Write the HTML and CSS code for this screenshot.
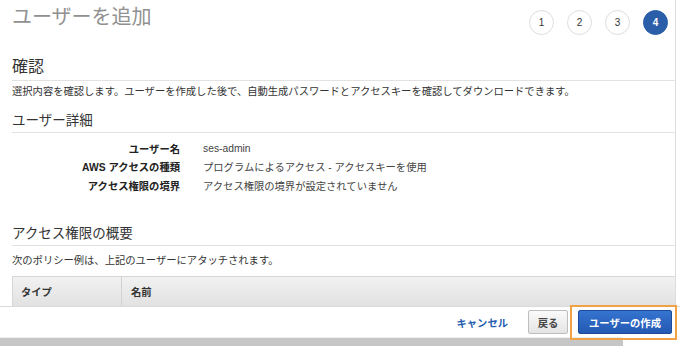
FILE: index.html
```html
<!DOCTYPE html>
<html lang="ja">
<head>
<meta charset="utf-8">
<link rel="stylesheet" href="styles.css">
</head>
<body>
<div class="panel">
  <div class="header">
    <h1 class="title">ユーザーを追加</h1>
    <div class="steps">
      <span class="step">1</span>
      <span class="step">2</span>
      <span class="step">3</span>
      <span class="step active">4</span>
    </div>
  </div>
  <h2 class="h-main">確認</h2>
  <p class="desc">選択内容を確認します。ユーザーを作成した後で、自動生成パスワードとアクセスキーを確認してダウンロードできます。</p>
  <h3 class="h-sub sub1">ユーザー詳細</h3>
  <div class="details">
    <div class="label">ユーザー名</div><div class="value">ses-admin</div>
    <div class="label">AWS アクセスの種類</div><div class="value">プログラムによるアクセス - アクセスキーを使用</div>
    <div class="label">アクセス権限の境界</div><div class="value">アクセス権限の境界が設定されていません</div>
  </div>
  <h3 class="h-sub sub2">アクセス権限の概要</h3>
  <p class="desc desc2">次のポリシー例は、上記のユーザーにアタッチされます。</p>
  <div class="table-head">
    <div class="th th-type">タイプ</div>
    <div class="th th-name">名前</div>
  </div>
</div>
<div class="footer">
  <a class="cancel">キャンセル</a>
  <button class="btn btn-back">戻る</button>
  <button class="btn btn-primary">ユーザーの作成</button>
  <span class="highlight"></span>
</div>
<div class="scrollbar"></div>
</body>
</html>
```

FILE: styles.css
```css
* { box-sizing: border-box; margin: 0; padding: 0; }
html, body { background: #fff; }
body {
  width: 680px;
  height: 346px;
  overflow: hidden;
  font-family: "Liberation Sans", "Noto Sans CJK JP", sans-serif;
  font-size: 10.3px;
  color: #333;
}
.panel {
  width: 676px;
  height: 306px;
  overflow: hidden;
  border-right: 1px solid #dcdcdc;
  padding-left: 12px;
}
.header {
  height: 44px;
  display: flex;
  justify-content: space-between;
  align-items: flex-start;
}
.title {
  font-weight: normal;
  font-size: 20px;
  line-height: 34px;
  color: #919191;
}
.steps {
  display: flex;
  gap: 13px;
  margin-top: 10px;
  margin-right: 7px;
}
.step {
  width: 25px;
  height: 25px;
  border-radius: 50%;
  border: 1px solid #dedede;
  display: flex;
  align-items: center;
  justify-content: center;
  font-size: 10px;
  color: #333;
  background: #fff;
}
.step.active {
  background: #2b5ea9;
  border-color: #2b5ea9;
  color: #fff;
  font-weight: bold;
}
.h-main {
  margin-top: 13px;
  font-weight: normal;
  font-size: 16px;
  line-height: 20px;
  padding-bottom: 3px;
  border-bottom: 1px solid #e2e2e2;
  color: #333;
}
.desc {
  margin-top: 4px;
  line-height: 14px;
}
.h-sub {
  font-weight: normal;
  font-size: 13.5px;
  line-height: 18px;
  padding-bottom: 2px;
  border-bottom: 1px solid #e2e2e2;
  color: #333;
}
.sub1 { margin-top: 13px; }
.sub2 { margin-top: 30.5px; }
.details {
  margin-top: 6px;
  display: grid;
  grid-template-columns: 168px 1fr;
  column-gap: 23px;
  grid-auto-rows: 18.5px;
  align-items: center;
}
.label {
  text-align: right;
  font-weight: bold;
  color: #222;
}
.value { color: #444; }
.desc2 { margin-top: 8px; }
.table-head {
  margin-top: 8px;
  height: 30px;
  display: flex;
  background: linear-gradient(#f1f1f1, #e2e2e2);
  border-top: 1px solid #d6d6d6;
  border-left: 1px solid #d6d6d6;
}
.th {
  display: flex;
  align-items: center;
  font-weight: bold;
  color: #333;
}
.th-type {
  width: 109px;
  padding-left: 8px;
  border-right: 1px solid #d2d2d2;
}
.th-name {
  padding-left: 9px;
}
.footer {
  position: relative;
  height: 31px;
  border-top: 1px solid #dadada;
  display: flex;
  justify-content: flex-end;
  align-items: center;
  padding-right: 8px;
}
.cancel {
  color: #1f5db0;
  font-weight: bold;
  margin-right: 20px;
  cursor: pointer;
}
.btn {
  height: 24px;
  border-radius: 2px;
  font-family: inherit;
  font-size: 10.3px;
  font-weight: bold;
  display: flex;
  align-items: center;
  justify-content: center;
}
.btn-back {
  width: 40px;
  background: linear-gradient(#fafafa, #e4e4e4);
  border: 1px solid #bdbdbd;
  color: #444;
  margin-right: 10px;
}
.btn-primary {
  width: 94px;
  background: linear-gradient(#3474cf, #2459b3);
  border: 1px solid #1d4d9a;
  color: #fff;
}
.highlight {
  position: absolute;
  left: 570px;
  top: -2px;
  width: 107px;
  height: 35px;
  border: 2px solid #f0a244;
  pointer-events: none;
}
.scrollbar {
  width: 623px;
  height: 9px;
  border-top: 1px solid #ececec;
  background: #c6c6c6;
}
```
